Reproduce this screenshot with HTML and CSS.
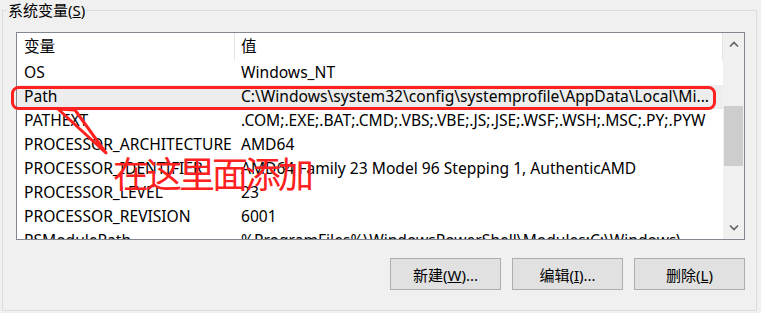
FILE: index.html
```html
<!DOCTYPE html>
<html lang="zh-CN">
<head>
<meta charset="utf-8">
<title>系统变量</title>
<link rel="stylesheet" href="styles.css">
</head>
<body>
<fieldset class="group">
  <legend class="group-label">系统变量(<u>S</u>)</legend>
  <div class="listbox">
    <div class="list">
      <div class="list-header">
        <div class="col col-name">变量</div>
        <div class="col col-value">值</div>
      </div>
      <div class="rows">
        <div class="row"><div class="cell cell-name">OS</div><div class="cell cell-value">Windows_NT</div></div>
        <div class="row selected"><div class="cell cell-name">Path</div><div class="cell cell-value">C:\Windows\system32\config\systemprofile\AppData\Local\Mi...</div></div>
        <div class="row"><div class="cell cell-name">PATHEXT</div><div class="cell cell-value">.COM;.EXE;.BAT;.CMD;.VBS;.VBE;.JS;.JSE;.WSF;.WSH;.MSC;.PY;.PYW</div></div>
        <div class="row"><div class="cell cell-name">PROCESSOR_ARCHITECTURE</div><div class="cell cell-value">AMD64</div></div>
        <div class="row"><div class="cell cell-name">PROCESSOR_IDENTIFIER</div><div class="cell cell-value">AMD64 Family 23 Model 96 Stepping 1, AuthenticAMD</div></div>
        <div class="row"><div class="cell cell-name">PROCESSOR_LEVEL</div><div class="cell cell-value">23</div></div>
        <div class="row"><div class="cell cell-name">PROCESSOR_REVISION</div><div class="cell cell-value">6001</div></div>
        <div class="row"><div class="cell cell-name">PSModulePath</div><div class="cell cell-value">%ProgramFiles%\WindowsPowerShell\Modules;C:\Windows\...</div></div>
      </div>
    </div>
    <div class="scrollbar">
      <div class="sb-btn">
        <svg width="10" height="7" viewBox="0 0 10 7"><path d="M1 5.5 L5 1.5 L9 5.5" fill="none" stroke="#606060" stroke-width="1.6"/></svg>
      </div>
      <div class="sb-track"><div class="sb-thumb"></div></div>
      <div class="sb-btn">
        <svg width="10" height="7" viewBox="0 0 10 7"><path d="M1 1.5 L5 5.5 L9 1.5" fill="none" stroke="#606060" stroke-width="1.6"/></svg>
      </div>
    </div>
  </div>
  <div class="buttons">
    <button class="btn">新建(<u>W</u>)...</button>
    <button class="btn">编辑(<u>I</u>)...</button>
    <button class="btn">删除(<u>L</u>)</button>
  </div>
</fieldset>
<svg class="annot" width="761" height="313" viewBox="0 0 761 313">
  <rect x="12.5" y="87.5" width="702" height="21" rx="6" ry="6" fill="none" stroke="#ff2020" stroke-width="3"/>
  <polygon points="58,109 75,110 106,153" fill="none" stroke="#ff2020" stroke-width="3" stroke-linejoin="round"/>
</svg>
<div class="annot-text">在这里面添加</div>
</body>
</html>
```
FILE: styles.css
```css
html, body {
  margin: 0;
  padding: 0;
  width: 761px;
  height: 313px;
  overflow: hidden;
  background: #f0f0f0;
}
body {
  position: relative;
  font-family: "Noto Sans", "Noto Sans CJK SC", sans-serif;
  font-size: 15px;
  color: #000;
}
.group {
  margin: 0 4px 0 2px;
  border: 1px solid #dcdcdc;
  padding: 12px 11px 20px 13px;
  min-width: 0;
}
.group-label {
  margin-left: -9px;
  padding: 0 1px;
  line-height: 20px;
  height: 20px;
}
.listbox {
  display: flex;
  height: 208px;
  box-sizing: border-box;
  border: 1px solid #828790;
  background: #fff;
  font-size: 15.6px;
}
.list {
  width: 706px;
  overflow: hidden;
}
.list-header {
  display: flex;
  height: 28px;
  line-height: 26px;
}
.col {
  box-sizing: border-box;
  border-right: 1px solid #e5e5e5;
  white-space: nowrap;
}
.col-name {
  width: 218px;
  padding-left: 7px;
}
.col-value {
  flex: 1;
  padding-left: 6px;
}
.row {
  display: flex;
  height: 24px;
  line-height: 22px;
}
.row.selected {
  background: #ededed;
}
.cell {
  box-sizing: border-box;
  white-space: nowrap;
  overflow: hidden;
}
.cell-name {
  width: 218px;
  padding-left: 7px;
}
.cell-value {
  flex: 1;
  padding-left: 6px;
}
.scrollbar {
  width: 21px;
  background: #f0f0f0;
  display: flex;
  flex-direction: column;
}
.sb-btn {
  height: 23px;
  display: flex;
  align-items: center;
  justify-content: center;
}
.sb-track {
  flex: 1;
}
.sb-thumb {
  margin: 50px 0 0 1px;
  width: 19px;
  height: 60px;
  background: #cdcdcd;
}
.buttons {
  display: flex;
  justify-content: flex-end;
  gap: 11px;
  margin-top: 18px;
}
.btn {
  width: 111px;
  height: 32px;
  margin: 0;
  padding: 0;
  background: #e1e1e1;
  border: 1px solid #adadad;
  font-family: "Noto Sans", "Noto Sans CJK SC", sans-serif;
  font-size: 15px;
  color: #000;
}
.annot {
  position: absolute;
  left: 0;
  top: 0;
  pointer-events: none;
}
.annot-text {
  position: absolute;
  left: 113px;
  top: 150px;
  font-family: "Noto Sans CJK SC", sans-serif;
  font-size: 36px;
  line-height: 44px;
  letter-spacing: -3px;
  color: #ff2020;
  white-space: nowrap;
}
```
